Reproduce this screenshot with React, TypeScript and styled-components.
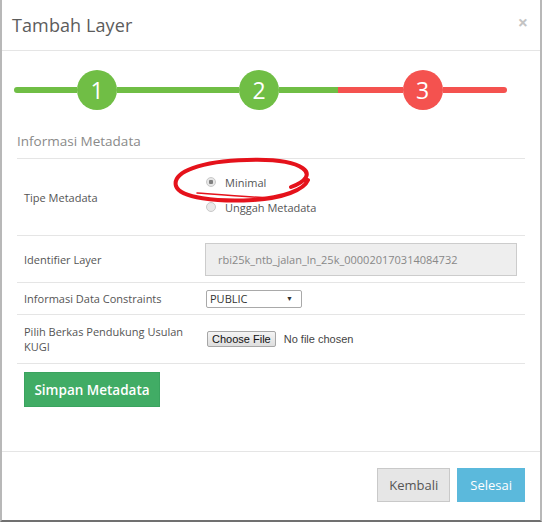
import React from 'react';
import styled, { createGlobalStyle } from 'styled-components';

const GlobalStyle = createGlobalStyle`
  html, body {
    margin: 0;
    padding: 0;
    background: #ffffff;
  }
  body {
    font-family: 'Open Sans', 'Liberation Sans', sans-serif;
    color: #555;
  }
  * { box-sizing: border-box; }
`;

const Colors = {
  green: '#70be45',
  red: '#f4524f',
  line: '#e5e5e5',
  text: '#555555',
};

const Modal = styled.div`
  width: 542px;
  height: 522px;
  display: flex;
  flex-direction: column;
  background: #fff;
  border-left: 2px solid #b8b8b8;
  border-right: 2px solid #b8b8b8;
  border-bottom: 2px solid #707070;
`;

const Header = styled.div`
  height: 51px;
  flex-shrink: 0;
  display: flex;
  align-items: center;
  justify-content: space-between;
  padding: 0 12px 0 10px;
  border-bottom: 1px solid ${Colors.line};
`;

const Title = styled.h4`
  margin: 0;
  font-size: 18px;
  font-weight: 400;
  color: #5c5c5c;
  letter-spacing: 0.1px;
`;

const Close = styled.span`
  font-size: 18px;
  font-weight: 700;
  color: #c4c4c4;
  line-height: 1;
  margin-top: -6px;
`;

const Body = styled.div`
  flex: 1;
  padding: 0 15px;
`;

// columns sized so the circles sit where the wizard puts them
const Stepper = styled.div`
  display: grid;
  grid-template-columns: 166px 158px 169px;
  margin: 19px 0 0 -3px;
  height: 40px;
`;

const Step = styled.div<{ $left: string; $right: string; $first?: boolean; $last?: boolean }>`
  display: flex;
  align-items: center;
  &::before, &::after {
    content: '';
    flex: 1;
    height: 6px;
  }
  &::before {
    background: ${p => p.$left};
    border-radius: ${p => (p.$first ? '3px 0 0 3px' : '0')};
  }
  &::after {
    background: ${p => p.$right};
    border-radius: ${p => (p.$last ? '0 3px 3px 0' : '0')};
  }
`;

const StepCircle = styled.div<{ $color: string }>`
  width: 40px;
  height: 40px;
  border-radius: 50%;
  background: ${p => p.$color};
  color: #fff;
  font-size: 23px;
  display: flex;
  align-items: center;
  justify-content: center;
  line-height: 1;
`;

const SectionTitle = styled.div`
  margin-top: 21px;
  padding-bottom: 7px;
  font-size: 13.5px;
  line-height: 20px;
  color: #8a8a8a;
  border-bottom: 1px solid ${Colors.line};
`;

const Row = styled.div<{ $height: number }>`
  display: flex;
  align-items: center;
  min-height: ${p => p.$height}px;
  border-bottom: 1px solid ${Colors.line};
  padding-right: 8px;
`;

const Label = styled.div`
  width: 188px;
  flex-shrink: 0;
  padding: 0 20px 0 7px;
  font-size: 11px;
  line-height: 15px;
  color: ${Colors.text};
`;

const RadioGroup = styled.div`
  display: flex;
  flex-direction: column;
  gap: 7px;
  padding: 6px 0 0 1px;
  align-self: flex-start;
  margin-top: 8px;
`;

const RadioOption = styled.div`
  position: relative;
  display: flex;
  align-items: center;
  height: 18px;
  font-size: 11px;
  color: ${Colors.text};
`;

const RadioDot = styled.span<{ $checked?: boolean }>`
  width: 10px;
  height: 10px;
  border-radius: 50%;
  border: 1px solid #c9c9c9;
  background: ${p => (p.$checked ? 'radial-gradient(circle, #808080 0 2px, #e6e6e6 2.5px)' : '#e9e9e9')};
  margin-right: 9px;
`;

const Annotation = styled.svg`
  position: absolute;
  left: -35px;
  top: -17px;
  width: 142px;
  height: 48px;
  pointer-events: none;
  overflow: visible;
`;

const ReadonlyInput = styled.div`
  flex: 1;
  height: 33px;
  display: flex;
  align-items: center;
  padding: 0 12px;
  background: #eeeeee;
  border: 1px solid #cccccc;
  font-size: 11px;
  color: #888;
`;

const SelectBox = styled.div`
  width: 96px;
  height: 18px;
  margin-left: 1px;
  display: flex;
  align-items: center;
  justify-content: space-between;
  padding: 0 8px 0 3px;
  border: 1px solid #a9a9a9;
  border-radius: 2px;
  background: #fff;
  font-size: 11px;
  color: #333;
  span:last-child {
    font-size: 7px;
    color: #333;
  }
`;

const FileField = styled.div`
  display: flex;
  align-items: center;
  gap: 8px;
  margin-left: 2px;
  font-family: 'Liberation Sans', Arial, sans-serif;
  font-size: 11px;
  color: #444;
`;

const FileButton = styled.span`
  padding: 1px 4px;
  border: 1px solid #a6a6a6;
  border-radius: 2px;
  background: linear-gradient(#f4f4f4, #dedede);
  color: #111;
`;

const SaveButton = styled.button`
  margin: 8px 0 0 7px;
  width: 136px;
  height: 35px;
  border: 1px solid #3aa35f;
  background: #41ac65;
  color: #fff;
  font-family: 'Open Sans', sans-serif;
  font-size: 13.5px;
  font-weight: 600;
  padding: 0;
`;

const Footer = styled.div`
  height: 69px;
  flex-shrink: 0;
  display: flex;
  align-items: center;
  justify-content: flex-end;
  gap: 7px;
  padding: 0 15px 2px 0;
  border-top: 1px solid ${Colors.line};
`;

const FooterButton = styled.button<{ $primary?: boolean }>`
  height: 34px;
  padding: 0 ${p => (p.$primary ? 12 : 11)}px;
  border: 1px solid ${p => (p.$primary ? '#5bb9dc' : '#c9c9c9')};
  background: ${p => (p.$primary ? '#5bb9dc' : '#e6e6e6')};
  color: ${p => (p.$primary ? '#fff' : '#555')};
  font-family: 'Open Sans', sans-serif;
  font-size: 13px;
`;

function App() {
  return (
    <>
      <GlobalStyle />
      <Modal>
        <Header>
          <Title>Tambah Layer</Title>
          <Close>×</Close>
        </Header>

        <Body>
          <Stepper>
            <Step $left={Colors.green} $right={Colors.green} $first>
              <StepCircle $color={Colors.green}>1</StepCircle>
            </Step>
            <Step $left={Colors.green} $right={Colors.green}>
              <StepCircle $color={Colors.green}>2</StepCircle>
            </Step>
            <Step $left={Colors.red} $right={Colors.red} $last>
              <StepCircle $color={Colors.red}>3</StepCircle>
            </Step>
          </Stepper>

          <SectionTitle>Informasi Metadata</SectionTitle>

          <Row $height={77}>
            <Label>Tipe Metadata</Label>
            <RadioGroup>
              <RadioOption>
                <RadioDot $checked />
                Minimal
                <Annotation viewBox="0 0 142 48">
                  <path
                    d="M120 31 C152 19 134 2 76 4 C30 5 1 16 5 30 C9 42 46 46 82 44 C112 42 133 34 137 24"
                    fill="none"
                    stroke="#e5121b"
                    strokeWidth="4"
                    strokeLinecap="round"
                  />
                  <path
                    d="M26 37 C52 39 76 41 100 42"
                    fill="none"
                    stroke="#e5121b"
                    strokeWidth="1.5"
                    strokeLinecap="round"
                  />
                </Annotation>
              </RadioOption>
              <RadioOption>
                <RadioDot />
                Unggah Metadata
              </RadioOption>
            </RadioGroup>
          </Row>

          <Row $height={47}>
            <Label>Identifier Layer</Label>
            <ReadonlyInput>rbi25k_ntb_jalan_ln_25k_000020170314084732</ReadonlyInput>
          </Row>

          <Row $height={32}>
            <Label>Informasi Data Constraints</Label>
            <SelectBox>
              <span>PUBLIC</span>
              <span>▼</span>
            </SelectBox>
          </Row>

          <Row $height={49}>
            <Label>Pilih Berkas Pendukung Usulan KUGI</Label>
            <FileField>
              <FileButton>Choose File</FileButton>
              <span>No file chosen</span>
            </FileField>
          </Row>

          <SaveButton>Simpan Metadata</SaveButton>
        </Body>

        <Footer>
          <FooterButton>Kembali</FooterButton>
          <FooterButton $primary>Selesai</FooterButton>
        </Footer>
      </Modal>
    </>
  );
}

export default App;
